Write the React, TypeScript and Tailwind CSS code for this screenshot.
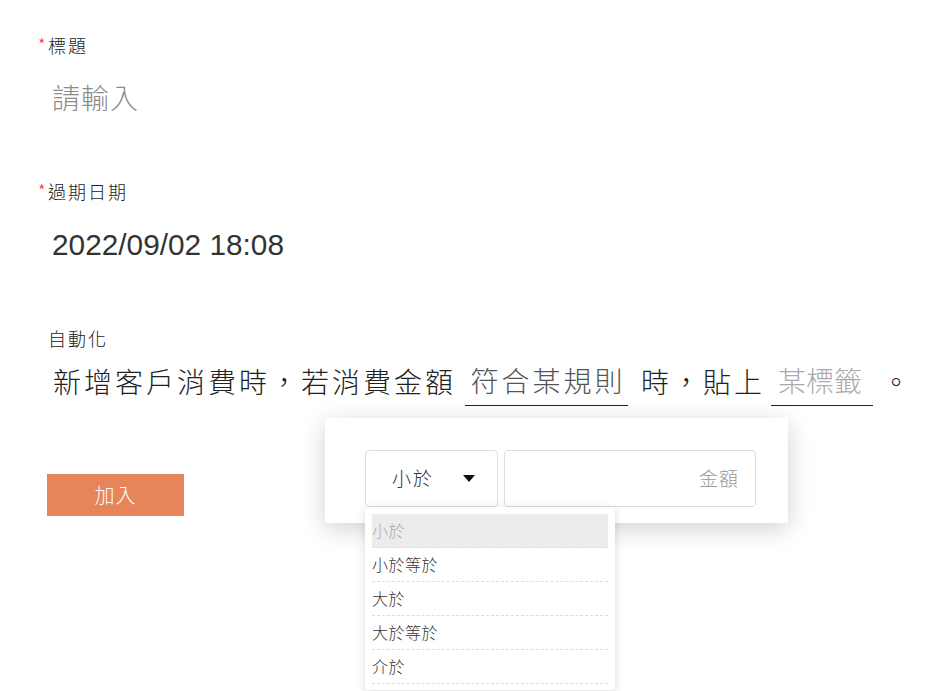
import React from "react";

const F = { fontFamily: '"Noto Sans CJK TC", "Liberation Sans", sans-serif' } as React.CSSProperties;

function Label({ text, required }: { text: string; required?: boolean }) {
  return (
    <div className="flex h-[22px] items-center text-[18px] font-light leading-[22px] tracking-[2px] text-[#222]">
      <span className="-mt-[4px] w-[10px] text-[17px] leading-none tracking-normal text-[#f5222d]">{required ? "*" : ""}</span>
      <span>{text}</span>
    </div>
  );
}

const options = ["小於", "小於等於", "大於", "大於等於", "介於"];

export default function App() {
  return (
    <div className="relative h-[691px] w-[945px] overflow-hidden bg-white" style={F}>
      <div className="flex flex-col pl-[38px] pt-[34px]">
        <Label text="標題" required />
        <div className="mt-[16px] flex h-[50px] items-center pl-[14px] text-[28px] font-light tracking-[1px] text-[#8c8c8c]">請輸入</div>

        <div className="mt-[58px]">
          <Label text="過期日期" required />
        </div>
        <div
          className="mt-[18px] flex h-[50px] items-center pl-[14px] text-[29.8px] text-[#333]"
          style={{ fontFamily: '"Liberation Sans", Arial, sans-serif' }}
        >
          2022/09/02 18:08
        </div>

        <div className="mt-[57px]">
          <Label text="自動化" />
        </div>
        <div className="mt-[11px] flex h-[46px] items-center pb-[5px] pl-[15px] text-[28px] font-light tracking-[3px] text-[#222]">
          <span>新增客戶消費時，若消費金額</span>
          <span className="ml-[9px] -mb-[5px] flex h-[46px] w-[163px] items-center justify-center border-b border-[#222] pb-[5px] pl-[3px] text-[#555]">符合某規則</span>
          <span className="ml-[13px]">時，貼上</span>
          <span className="ml-[6px] -mb-[5px] flex h-[46px] w-[102px] items-center border-b border-[#222] pb-[5px] pl-[7px] tracking-[0px] text-[#aaa]">某標籤</span>
          <span className="ml-[9px]">。</span>
        </div>

        <div className="mt-[68px] pl-[9px]">
          <button className="flex h-[42px] w-[137px] items-center justify-center bg-[#e6855a] text-[20px] font-light tracking-[1px] text-white">
            加入
          </button>
        </div>
      </div>

      {/* popup card */}
      <div className="absolute left-[325px] top-[418px] flex h-[105px] w-[463px] items-start gap-[6px] bg-white pl-[40px] pt-[32px] shadow-[0_6px_24px_rgba(0,0,0,0.18)]">
        <div className="flex h-[57px] w-[133px] items-center justify-between rounded-[4px] border border-[#ddd] pl-[26px] pr-[22px] text-[19px] font-light tracking-[2px] text-[#333]">
          <span>小於</span>
          <svg width="12" height="7" viewBox="0 0 12 7">
            <path d="M0 0 L12 0 L6 7 Z" fill="#111" />
          </svg>
        </div>
        <div className="flex h-[57px] w-[252px] items-center justify-end rounded-[4px] border border-[#ddd] pr-[16px] text-[19px] font-light tracking-[1px] text-[#999]">
          金額
        </div>
      </div>

      {/* dropdown */}
      <div className="absolute left-[365px] top-[507px] w-[250px] rounded-[4px] bg-white px-[7px] pt-[7px] pb-[6px] shadow-[0_2px_8px_rgba(0,0,0,0.15)]">
        {options.map((o, i) => (
          <div
            key={o}
            className={`flex h-[34px] items-center border-b border-dashed border-[#ddd] pb-[1px] text-[16px] font-light tracking-[0.5px] ${
              i === 0 ? "bg-[#ececec] text-[#aaa]" : "text-[#333]"
            }`}
          >
            {o}
          </div>
        ))}
      </div>
    </div>
  );
}
